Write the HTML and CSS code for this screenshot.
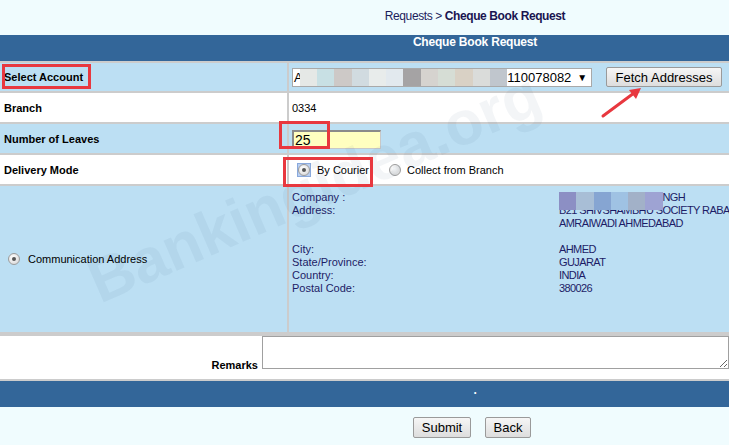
FILE: index.html
```html
<!DOCTYPE html>
<html lang="en">
<head>
    <meta charset="UTF-8">
    <meta name="viewport" content="width=device-width, initial-scale=1.0">
    <title>Cheque Book Request</title>
    <link rel="stylesheet" href="styles.css">
</head>
<body>
    <div class="page">
        <div class="crumb">Requests &gt; <b>Cheque Book Request</b></div>
        <div class="band">Cheque Book Request</div>

        <div class="row alt first">
            <div class="label">Select Account</div>
            <div class="value">
                <div class="select">
                    <span class="sel-text">A</span>
                    <span class="blur sel-blur">
                        <i style="background:#e5e8e6"></i><i style="background:#c8e0e4"></i><i style="background:#cdc9c7"></i><i style="background:#d1dbe0"></i><i style="background:#e8eceb"></i><i style="background:#e2e9ee"></i><i style="background:#a5a3a4"></i><i style="background:#d6d3cf"></i><i style="background:#d6ddd5"></i><i style="background:#d9d1c5"></i><i style="background:#dadcda"></i><i style="background:#c0c6cd"></i>
                    </span>
                    <span class="sel-text">110078082</span>
                    <span class="caret">&#9660;</span>
                </div>
                <button class="btn fetch">Fetch Addresses</button>
            </div>
        </div>

        <div class="row">
            <div class="label">Branch</div>
            <div class="value small">0334</div>
        </div>

        <div class="row alt">
            <div class="label">Number of Leaves</div>
            <div class="value"><input class="leaves" type="text" value="25"></div>
        </div>

        <div class="row">
            <div class="label">Delivery Mode</div>
            <div class="value small">
                <span class="focus-box"><span class="radio checked"></span></span><span class="opt">By Courier</span>
                <span class="radio second"></span><span class="opt">Collect from Branch</span>
            </div>
        </div>

        <div class="row alt address-row">
            <div class="label plain"><span class="radio checked"></span><span class="opt wide">Communication Address</span></div>
            <div class="value address">
                <div class="addr-grid">
                    <div>Company :</div><div class="val name">INGH</div>
                    <div>Address:</div><div class="val">B21 SHIVSHAMBHU SOCIETY RABARI</div>
                    <div></div><div class="val">AMRAIWADI AHMEDABAD</div>
                    <div>&nbsp;</div><div></div>
                    <div>City:</div><div class="val">AHMED</div>
                    <div>State/Province:</div><div class="val">GUJARAT</div>
                    <div>Country:</div><div class="val">INDIA</div>
                    <div>Postal Code:</div><div class="val">380026</div>
                </div>
                <span class="blur addr-blur">
                    <i style="background:#8c8fc4"></i><i style="background:#a8bed6"></i><i style="background:#86a5d2"></i><i style="background:#9fc2e3"></i><i style="background:#a2b1c8"></i><i style="background:#9ea3d3"></i>
                </span>
            </div>
        </div>

        <div class="remarks">
            <div class="remarks-label">Remarks</div>
            <textarea class="remarks-box"></textarea>
        </div>

        <div class="band footer-band">.</div>

        <div class="actions">
            <button class="btn submit">Submit</button>
            <button class="btn back">Back</button>
        </div>

        <div class="watermark">Bankingidea.org</div>

        <div class="mark mark-account"></div>
        <div class="mark mark-leaves"></div>
        <div class="mark mark-delivery"></div>

        <svg class="arrow" width="50" height="40" viewBox="0 0 50 40">
            <line x1="7" y1="34" x2="38" y2="11" stroke="#e8383f" stroke-width="3" stroke-linecap="round"/>
            <polygon points="45,6 40,17 33,8" fill="#e8383f"/>
        </svg>
    </div>
</body>
</html>
```

FILE: styles.css
```css
* {
    margin: 0;
    padding: 0;
    box-sizing: border-box;
}

body {
    background: #f0fcfe;
    font-family: "Liberation Sans", Arial, sans-serif;
    overflow: hidden;
}

.page {
    position: relative;
    width: 950px;
    height: 445px;
}

.crumb {
    height: 35px;
    text-align: center;
    font-size: 12px;
    line-height: 33px;
    color: #1c1c5c;
    letter-spacing: -0.4px;
}

.crumb b {
    color: #1a1450;
}

.band {
    height: 28px;
    background: #336699;
    border-bottom: 2px solid #cccccc;
    color: #ffffff;
    font-weight: bold;
    font-size: 12px;
    text-align: center;
    line-height: 15px;
    letter-spacing: -0.2px;
}

.row {
    display: grid;
    grid-template-columns: 289px 1fr;
    height: 31px;
    background: #ffffff;
    border-bottom: 2px solid #cccccc;
}

.row.alt {
    background: #bcdff3;
}

.row.first {
    height: 30px;
}

.label {
    display: flex;
    align-items: center;
    padding-left: 4px;
    border-right: 2px solid #cccccc;
    font-size: 11px;
    font-weight: bold;
    color: #000000;
}

.label.plain {
    font-weight: normal;
    padding-left: 8px;
}

.value {
    display: flex;
    align-items: center;
    padding-left: 3px;
}

.value.small {
    font-size: 11px;
    color: #000000;
}

.select {
    display: flex;
    align-items: center;
    width: 300px;
    height: 19px;
    background: #ffffff;
    border: 1px solid #a9a9a9;
    font-size: 13px;
    color: #000000;
    padding-left: 1px;
    overflow: hidden;
}

.blur {
    display: flex;
    height: 17px;
}

.blur i {
    display: block;
    width: 17.3px;
    height: 100%;
}

.sel-blur {
    margin-left: -3px;
}

.sel-text {
    line-height: 17px;
}

.caret {
    font-size: 10px;
    margin-left: 6px;
}

.btn {
    font-family: "Liberation Sans", Arial, sans-serif;
    font-size: 13px;
    color: #000000;
    height: 20px;
    padding: 0;
    background: linear-gradient(#f6f6f6, #dddddd);
    border: 1px solid #9a9a9a;
    border-radius: 2px;
}

.fetch {
    width: 116px;
    margin-left: 14px;
}

.leaves {
    width: 89px;
    height: 19px;
    margin-top: 1px;
    background: #ffffc0;
    border: 1px solid #c8c8c8;
    border-top: 2px solid #8a8a8a;
    border-left: 2px solid #8a8a8a;
    font-family: "Liberation Sans", Arial, sans-serif;
    font-size: 14px;
    padding-left: 1px;
    color: #000000;
}

.radio {
    display: inline-block;
    position: relative;
    width: 12px;
    height: 12px;
    border-radius: 50%;
    border: 1px solid #9c9c9c;
    background: radial-gradient(circle at 40% 35%, #ffffff, #d2d2d2);
}

.radio.checked::after {
    content: '';
    position: absolute;
    left: 3px;
    top: 3px;
    width: 4px;
    height: 4px;
    border-radius: 50%;
    background: #555555;
}

.focus-box {
    display: inline-flex;
    align-items: center;
    justify-content: center;
    width: 14px;
    height: 14px;
    margin-left: 5px;
    background: #b9cff1;
    border: 1px solid #8aa9dc;
}

.radio.second {
    margin-left: 20px;
}

.opt {
    margin-left: 6px;
}

.opt.wide {
    margin-left: 8px;
}

.address-row {
    height: 150px;
    border-bottom-width: 4px;
}

.address {
    position: relative;
    align-items: flex-start;
    padding-top: 5px;
    overflow: hidden;
}

.addr-grid {
    display: grid;
    grid-template-columns: 267px auto;
    font-size: 11px;
    line-height: 13px;
    color: #1c1c66;
    white-space: nowrap;
}

.addr-grid .val {
    letter-spacing: -0.6px;
}

.addr-grid .name {
    padding-left: 101px;
}

.addr-blur {
    position: absolute;
    left: 270px;
    top: 6px;
    height: 18px;
}

.remarks {
    display: grid;
    grid-template-columns: 262px 467px;
    height: 45px;
    background: #ffffff;
    border-bottom: 2px solid #cccccc;
}

.remarks-label {
    align-self: end;
    text-align: right;
    padding-right: 4px;
    padding-bottom: 7px;
    font-size: 11px;
    font-weight: bold;
    line-height: 13px;
}

.remarks-box {
    height: 33px;
    border: 1px solid #a0a0a0;
    resize: both;
}

.footer-band {
    height: 26px;
    border-bottom: none;
    line-height: 18px;
}

.actions {
    display: flex;
    justify-content: center;
    gap: 14px;
    padding: 10px 6px 0 0;
}

.actions .btn {
    height: 21px;
}

.submit {
    width: 58px;
}

.back {
    width: 46px;
}

.watermark {
    position: absolute;
    left: 100px;
    top: 252px;
    font-size: 62px;
    line-height: 62px;
    font-weight: bold;
    color: rgba(30, 70, 110, 0.055);
    white-space: nowrap;
    transform-origin: 0 52px;
    transform: rotate(-23.5deg);
    pointer-events: none;
}

.mark {
    position: absolute;
    border: 3px solid #e8383f;
}

.mark-account {
    left: 2px;
    top: 64px;
    width: 89px;
    height: 25px;
}

.mark-leaves {
    left: 279px;
    top: 121px;
    width: 51px;
    height: 28px;
}

.mark-delivery {
    left: 283px;
    top: 157px;
    width: 90px;
    height: 30px;
}

.arrow {
    position: absolute;
    left: 596px;
    top: 82px;
}
```
